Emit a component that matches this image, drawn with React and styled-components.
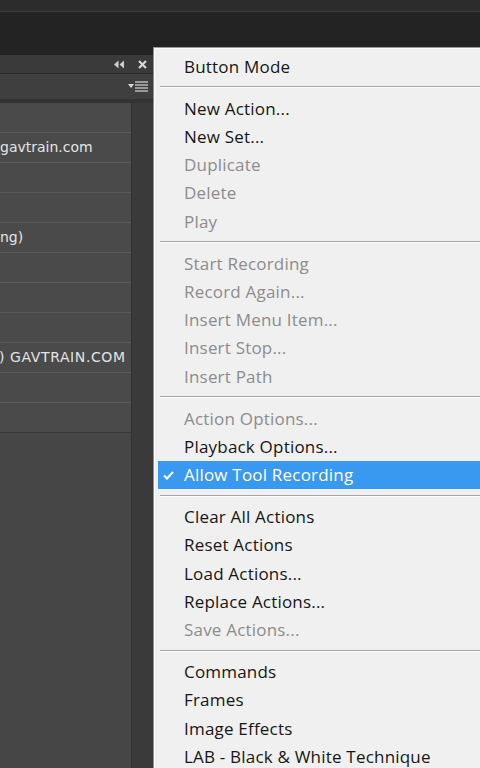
import React from 'react'
import styled, { createGlobalStyle } from 'styled-components'

const GlobalStyle = createGlobalStyle`
  html, body {
    margin: 0;
    padding: 0;
    background: #232323;
  }
  body {
    width: 480px;
    height: 768px;
    overflow: hidden;
  }
`

const Page = styled.div`
  position: relative;
  width: 480px;
  height: 768px;
  display: flex;
  flex-direction: column;
  background: #232323;
  overflow: hidden;
`

const TopStrip = styled.div`
  height: 11px;
  background: #2c2c2c;
  border-bottom: 1px solid #393939;
`

const Dock = styled.div`
  height: 43px;
  background: #232323;
`

const Panel = styled.div`
  width: 153px;
  flex: 1;
  display: flex;
  flex-direction: column;
`

const PanelHeader = styled.div`
  height: 18px;
  background: #3a3a3a;
  border-bottom: 1px solid #2a2a2a;
  display: flex;
  align-items: center;
  justify-content: flex-end;
  gap: 13px;
  padding-right: 6px;
`

const Toolbar = styled.div`
  height: 25px;
  background: #3f3f3f;
  border-bottom: 4px solid #333;
  display: flex;
  align-items: center;
  justify-content: flex-end;
  padding-right: 5px;
`

const Body = styled.div`
  flex: 1;
  display: flex;
`

const List = styled.div`
  width: 131px;
  background: #464646;
  display: flex;
  flex-direction: column;
`

const Row = styled.div`
  height: 29px;
  line-height: 29px;
  background: #4a4a4a;
  border-bottom: 1px solid #5a5a5a;
  color: #e4e4e4;
  font-family: "DejaVu Sans", sans-serif;
  font-size: 14px;
  letter-spacing: ${p => p.$spread || 0}px;
  white-space: nowrap;
  overflow: hidden;
  text-indent: ${p => p.$cut || 0}px;

  &:last-child {
    border-bottom: 1px solid #383838;
  }
`

const ScrollTrack = styled.div`
  width: 21px;
  background: #3a3a3a;
  border-left: 1px solid #333;
`

const Menu = styled.div`
  position: absolute;
  left: 153px;
  top: 47px;
  right: -20px;
  bottom: -20px;
  background: #f0f0f0;
  border-left: 1px solid #8e8e8e;
  border-top: 1px solid #9a9a9a;
  box-shadow: inset 1px 1px 0 #fcfcfc;
  padding: 4px 0 0 4px;
  display: flex;
  flex-direction: column;
`

const Item = styled.div`
  position: relative;
  height: 28.25px;
  display: flex;
  align-items: center;
  padding-left: 26px;
  font-family: "Open Sans", "Noto Sans", sans-serif;
  font-size: 17px;
  letter-spacing: 0.2px;
  white-space: nowrap;
  color: ${p => (p.$selected ? '#fff' : p.$disabled ? '#8c8c8c' : '#161616')};
  background: ${p => (p.$selected ? '#3998ef' : 'transparent')};
`

const Check = styled.svg`
  position: absolute;
  left: 5px;
  top: 10px;
`

const Separator = styled.div`
  height: 13.75px;
  display: flex;
  align-items: center;
  padding-left: 2px;

  &::after {
    content: '';
    flex: 1;
    height: 1px;
    background: #a6a6a6;
    border-bottom: 1px solid #fdfdfd;
  }
`

const rows = [
  { text: '' },
  { text: 'gavtrain.com' },
  { text: '' },
  { text: '' },
  { text: 'ng)' },
  { text: '' },
  { text: '' },
  { text: '' },
  { text: ') GAVTRAIN.COM', cut: -1, spread: 0.6 },
  { text: '' },
  { text: '' },
]

const groups = [
  [['Button Mode']],
  [['New Action...'], ['New Set...'], ['Duplicate', 'off'], ['Delete', 'off'], ['Play', 'off']],
  [
    ['Start Recording', 'off'],
    ['Record Again...', 'off'],
    ['Insert Menu Item...', 'off'],
    ['Insert Stop...', 'off'],
    ['Insert Path', 'off'],
  ],
  [['Action Options...', 'off'], ['Playback Options...'], ['Allow Tool Recording', 'on']],
  [
    ['Clear All Actions'],
    ['Reset Actions'],
    ['Load Actions...'],
    ['Replace Actions...'],
    ['Save Actions...', 'off'],
  ],
  [['Commands'], ['Frames'], ['Image Effects'], ['LAB - Black & White Technique']],
]

const CollapseIcon = () => (
  <svg width="12" height="9" viewBox="0 0 12 9">
    <path d="M5.5 0.5 L1 4.5 L5.5 8.5 Z M11 0.5 L6.5 4.5 L11 8.5 Z" fill="#cfcfcf" />
  </svg>
)

const CloseIcon = () => (
  <svg width="9" height="9" viewBox="0 0 9 9">
    <path d="M1 1 L8 8 M8 1 L1 8" stroke="#d6d6d6" strokeWidth="2.2" />
  </svg>
)

const PanelMenuIcon = () => (
  <svg width="20" height="11" viewBox="0 0 20 11">
    <path d="M0 3 L6 3 L3 7 Z" fill="#d8d8d8" />
    <path d="M7 1 H20 M7 4 H20 M7 7 H20 M7 10 H20" stroke="#b8b8b8" strokeWidth="1.4" />
  </svg>
)

export default function App() {
  return (
    <>
      <GlobalStyle />
      <Page>
        <TopStrip />
        <Dock />
        <Panel>
          <PanelHeader>
            <CollapseIcon />
            <CloseIcon />
          </PanelHeader>
          <Toolbar>
            <PanelMenuIcon />
          </Toolbar>
          <Body>
            <List>
              {rows.map((r, i) => (
                <Row key={i} $cut={r.cut} $spread={r.spread}>{r.text}</Row>
              ))}
            </List>
            <ScrollTrack />
          </Body>
        </Panel>
        <Menu>
          {groups.map((g, gi) => (
            <React.Fragment key={gi}>
              {gi > 0 && <Separator />}
              {g.map(([label, state]) => (
                <Item key={label} $disabled={state === 'off'} $selected={state === 'on'}>
                  {state === 'on' && (
                    <Check width="11" height="9" viewBox="0 0 11 9">
                      <path d="M1 4.5 L4 7.5 L10 1" stroke="#fff" strokeWidth="2.2" fill="none" />
                    </Check>
                  )}
                  {label}
                </Item>
              ))}
            </React.Fragment>
          ))}
        </Menu>
      </Page>
    </>
  )
}
